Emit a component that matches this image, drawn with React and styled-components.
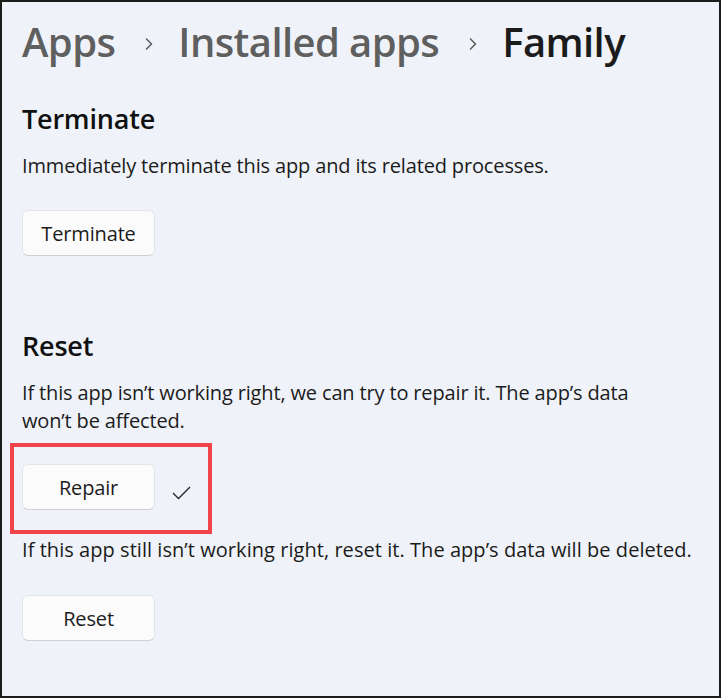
import React from 'react';
import styled, {createGlobalStyle} from 'styled-components';

const GlobalStyle = createGlobalStyle`
  html, body {
    margin: 0;
    padding: 0;
    background: #ffffff;
  }
  body {
    font-family: "Segoe UI", "Open Sans", "Noto Sans", sans-serif;
    -webkit-font-smoothing: antialiased;
  }
`

const Frame = styled('div')`
  box-sizing: border-box;
  width: 721px;
  height: 698px;
  border: 2px solid #1c1c1c;
  background: #eff3f9;
  padding: 14px 20px 0 20px;
  overflow: hidden;
`

const Breadcrumb = styled('div')`
  display: flex;
  align-items: center;
  height: 52px;
  font-size: 40px;
  font-weight: 600;
  letter-spacing: -0.6px;
`

const Crumb = styled('span')`
  color: ${({current}) => (current ? '#1b1b1b' : '#5f5f5f')};
  line-height: 52px;
`

const Chevron = styled('svg')`
  width: 10px;
  height: 14px;
  margin: 4px 24px 0 29px;
  flex-shrink: 0;
`

const Section = styled('section')`
  display: flex;
  flex-direction: column;
  align-items: flex-start;
  margin-top: ${({top}) => top}px;
`

const Heading = styled('h2')`
  margin: 0;
  font-size: 27px;
  line-height: 34px;
  font-weight: 600;
  color: #111111;
  letter-spacing: -0.2px;
`

const Description = styled('p')`
  margin: ${({top}) => top ?? 16}px 0 0 0;
  font-size: 20px;
  line-height: 28px;
  color: #1b1b1b;
  letter-spacing: ${({wide}) => (wide ? '0.05px' : '-0.15px')};
`

const Button = styled('button')`
  box-sizing: border-box;
  width: 133px;
  height: 46px;
  margin-top: ${({top}) => top ?? 0}px;
  background: #fbfbfc;
  border: 1px solid #e2e4e8;
  border-bottom-color: #cdd0d5;
  border-radius: 6px;
  font-family: inherit;
  font-size: 20px;
  color: #1b1b1b;
  letter-spacing: -0.15px;
  cursor: pointer;
`

const ActionRow = styled('div')`
  position: relative;
  display: flex;
  align-items: center;
  gap: 17px;
  margin-top: ${({top}) => top}px;
`

const Highlight = styled('div')`
  position: absolute;
  left: -12px;
  top: -21px;
  width: 202px;
  height: 91px;
  box-sizing: border-box;
  border: 4px solid #f0444a;
  pointer-events: none;
`

const CheckIcon = styled('svg')`
  width: 19px;
  height: 14px;
  margin-top: 12px;
`

const ChevronRight = () => (
  <Chevron viewBox="0 0 10 14">
    <path d="M2.5 2 L7.5 7 L2.5 12" fill="none" stroke="#5f5f5f" strokeWidth="1.6" strokeLinecap="round" strokeLinejoin="round"/>
  </Chevron>
)

export default function App() {
  return (
    <>
      <GlobalStyle/>
      <Frame>
        <Breadcrumb>
          <Crumb>Apps</Crumb>
          <ChevronRight/>
          <Crumb>Installed apps</Crumb>
          <ChevronRight/>
          <Crumb current>Family</Crumb>
        </Breadcrumb>

        <Section top={34}>
          <Heading>Terminate</Heading>
          <Description>Immediately terminate this app and its related processes.</Description>
          <Button top={30}>Terminate</Button>
        </Section>

        <Section top={73}>
          <Heading>Reset</Heading>
          <Description top={16}>
            If this app isn’t working right, we can try to repair it. The app’s data<br/>
            won’t be affected.
          </Description>
          <ActionRow top={29}>
            <Highlight/>
            <Button>Repair</Button>
            <CheckIcon viewBox="0 0 19 14">
              <path d="M1 7 L6.5 12.5 L18 1" fill="none" stroke="#222" strokeWidth="1.3"/>
            </CheckIcon>
          </ActionRow>
          <Description top={26} wide>If this app still isn’t working right, reset it. The app’s data will be deleted.</Description>
          <Button top={31}>Reset</Button>
        </Section>
      </Frame>
    </>
  );
}
